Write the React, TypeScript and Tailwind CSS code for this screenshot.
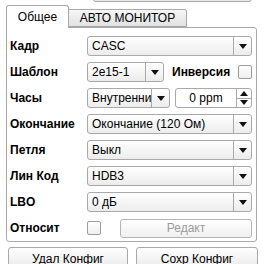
import React from 'react';

const Arrow: React.FC<{ up?: boolean }> = ({ up }) => (
  <svg width="8" height="5" viewBox="0 0 8 5" className="block">
    <path d={up ? 'M0 5 L4 0 L8 5 Z' : 'M0 0 L8 0 L4 5 Z'} fill="#111" />
  </svg>
);

const Combo: React.FC<{ value: string; className?: string }> = ({ value, className = '' }) => (
  <div className={`h-[20px] flex border border-[#a9a9a9] rounded-[3px] bg-gradient-to-b from-white to-[#ececec] ${className}`}>
    <div className="flex-1 min-w-0 pl-[4px] flex items-center whitespace-nowrap overflow-hidden">{value}</div>
    <div className="w-[18px] border-l border-[#a9a9a9] flex items-center justify-center">
      <Arrow />
    </div>
  </div>
);

const Check: React.FC = () => (
  <div className="w-[14px] h-[14px] border border-[#9c9c9c] rounded-[2px] bg-gradient-to-b from-white to-[#eeeeee]" />
);

const Row: React.FC<{ label: string; children: React.ReactNode }> = ({ label, children }) => (
  <div className="flex items-center h-[20px]">
    <div className="w-[80px] pl-[3px] font-bold whitespace-nowrap">{label}</div>
    <div className="flex-1 flex items-center min-w-0">{children}</div>
  </div>
);

export default function App() {
  return (
    <div className="w-[264px] h-[264px] overflow-hidden bg-white text-[12px] text-black font-['Liberation_Sans',Arial,sans-serif] leading-none">
      {/* button cut off above */}
      <div className="ml-[93px] w-[159px] h-[20px] -mt-[18px] border border-[#a9a9a9] rounded-[3px] bg-gradient-to-b from-white to-[#e8e8e8]" />

      {/* tabs */}
      <div className="flex items-end ml-[6px] mt-[3px] h-[22px] relative z-10">
        <div className="w-[63px] h-[23px] -mb-px border border-b-0 border-[#a9a9a9] rounded-t-[3px] bg-white flex items-center justify-center">
          Общее
        </div>
        <div className="w-[118px] h-[18px] border border-l-0 border-[#a9a9a9] rounded-tr-[3px] bg-gradient-to-b from-[#f6f6f6] to-[#e2e2e2] flex items-center justify-center">
          АВТО МОНИТОР
        </div>
      </div>

      {/* panel */}
      <div className="ml-[6px] w-[251px] h-[215px] border border-[#a9a9a9] rounded-b-[3px] rounded-tr-[3px] pt-[8px] pr-[4px] flex flex-col gap-[6px]">
        <Row label="Кадр">
          <Combo value="CASC" className="flex-1" />
        </Row>
        <Row label="Шаблон">
          <Combo value="2e15-1" className="w-[77px]" />
          <div className="ml-[8px] font-bold">Инверсия</div>
          <div className="ml-auto"><Check /></div>
        </Row>
        <Row label="Часы">
          <Combo value="Внутренни" className="w-[83px]" />
          <div className="ml-[5px] flex-1 h-[20px] flex border border-[#a9a9a9] rounded-[3px] bg-white">
            <div className="flex-1 flex items-center justify-center">0 ppm</div>
            <div className="w-[15px] border-l border-[#a9a9a9] flex flex-col">
              <div className="flex-1 flex items-center justify-center border-b border-[#a9a9a9]"><Arrow up /></div>
              <div className="flex-1 flex items-center justify-center"><Arrow /></div>
            </div>
          </div>
        </Row>
        <Row label="Окончание">
          <Combo value="Окончание (120 Ом)" className="flex-1" />
        </Row>
        <Row label="Петля">
          <Combo value="Выкл" className="flex-1" />
        </Row>
        <Row label="Лин Код">
          <Combo value="HDB3" className="flex-1" />
        </Row>
        <Row label="LBO">
          <Combo value="0 дБ" className="flex-1" />
        </Row>
        <Row label="Относит">
          <Check />
          <div className="ml-[19px] flex-1 h-[19px] border border-[#b4b4b4] rounded-[3px] bg-gradient-to-b from-white to-[#f0f0f0] flex items-center justify-center text-[#9a9a9a]">
            Редакт
          </div>
        </Row>
      </div>

      {/* bottom buttons */}
      <div className="flex gap-[8px] ml-[8px] mt-[5px]">
        <div className="w-[120px] h-[24px] border border-[#a9a9a9] rounded-[3px] bg-gradient-to-b from-white to-[#e8e8e8] flex items-center justify-center">
          Удал Конфиг
        </div>
        <div className="w-[122px] h-[24px] border border-[#a9a9a9] rounded-[3px] bg-gradient-to-b from-white to-[#e8e8e8] flex items-center justify-center">
          Сохр Конфиг
        </div>
      </div>
    </div>
  );
}
